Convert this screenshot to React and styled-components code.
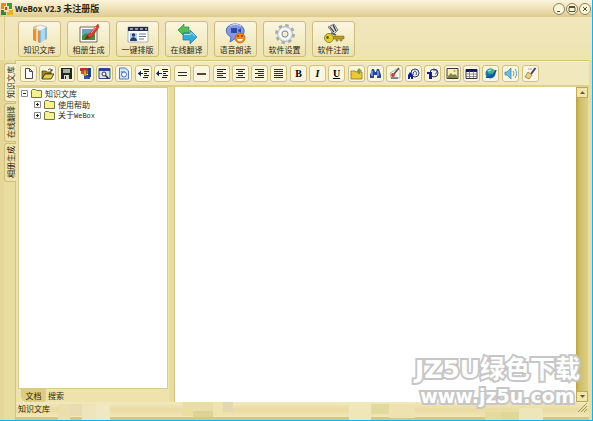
import React, { useState } from "react";
import styled, { createGlobalStyle } from "styled-components";

const GlobalStyle = createGlobalStyle`
  * {
    box-sizing: border-box;
  }
  body {
    margin: 0;
    font-family: "Liberation Sans", "Noto Sans CJK SC", sans-serif;
    font-size: 8px;
    color: #2c270f;
  }
  button {
    font: inherit;
    color: inherit;
    padding: 0;
    cursor: pointer;
  }
`;

const Window = styled.div`
  position: relative;
  display: flex;
  flex-direction: column;
  height: 100vh;
  border-right: 1px solid #0db4f5;
  border-bottom: 1px solid #0db4f5;
  background: #efe5b3;
`;

const TitleBar = styled.header`
  display: flex;
  align-items: center;
  height: 17px;
  padding: 0 1px;
  gap: 2px;
  background: linear-gradient(#fbf3dc, #f3e8c2 35%, #e3d19e 85%, #dcc98e);
`;

const Title = styled.h1`
  flex: 1;
  margin: 0;
  font-family: "Open Sans", "Noto Sans CJK SC", sans-serif;
  font-size: 8px;
  line-height: 16px;
  font-weight: bold;
  white-space: pre;
`;

const TitleCjk = styled.span`
  font-size: 9px;
`;

const WindowButton = styled.button`
  display: flex;
  align-items: center;
  justify-content: center;
  width: 12px;
  height: 12px;
  margin-left: -1px;
  border: 1px solid #8e8256;
  border-radius: 50%;
  background: #fbf5dc;
`;

const MainToolbar = styled.nav`
  display: flex;
  gap: 6px;
  height: 43px;
  margin-left: 4px;
  padding: 4px 13px;
  border-left: 1px solid #dccb8b;
  background: linear-gradient(#f1e6bd, #eee4b0);
`;

const MainButton = styled.button`
  display: flex;
  flex-direction: column;
  align-items: center;
  width: 43px;
  height: 36px;
  padding-top: 1px;
  border: 1px solid #cdbb7f;
  border-radius: 3px;
  background: linear-gradient(#fbf6e0, #f3ebc4 60%, #ede1ae);
  font-family: "Noto Sans CJK SC", sans-serif;
  line-height: 10px;

  svg {
    flex: none;
    width: 22px;
    height: 22px;
  }
`;

const Workspace = styled.div`
  display: flex;
  flex: 1;
  min-height: 0;
  border-right: 3px solid #eadb9f;
  border-left: 4px solid #e6d698;
  background: #e9dc9f;
`;

const SideTabs = styled.div`
  display: flex;
  flex-direction: column;
  gap: 1px;
  width: 12px;
  padding-top: 3px;
  border-right: 1px solid #d6c57f;
`;

const SideTab = styled.button`
  height: 39px;
  width: 12px;
  border: 1px solid #cfbd7b;
  border-right: 0;
  border-radius: 3px 0 0 3px;
  background: ${(p) => (p.$active ? "#f7f0cf" : "#eee2ac")};
`;

const SideLabel = styled.span`
  display: block;
  width: 10px;
  margin: 0 auto;
  line-height: 10px;
  font-family: "Noto Sans CJK SC", sans-serif;
  writing-mode: vertical-rl;
  text-orientation: sideways;
  text-align: center;
  height: 37px;
  transform: rotate(180deg);
`;

const Main = styled.main`
  display: flex;
  flex-direction: column;
  flex: 1;
  min-width: 0;
`;

const EditToolbar = styled.div`
  display: flex;
  align-items: center;
  gap: 3px;
  height: 27px;
  padding: 1px 4px 0;
  border-top: 1px solid #d4c37c;
  border-bottom: 2px solid #dfcf8d;
  background: #f1e8bd;
  box-shadow: inset 0 1px #f9f3d5;
`;

const ToolGroup = styled.div`
  display: flex;
  gap: 2px;
`;

const ToolButton = styled.button`
  display: flex;
  align-items: center;
  justify-content: center;
  width: 17px;
  height: 17px;
  border: 1px solid #d1c084;
  border-radius: 3px;
  background: #fbf7df;

  svg {
    width: 13px;
    height: 13px;
  }
`;

const Glyph = styled.span`
  font-family: "Liberation Serif", serif;
  font-size: 10px;
  line-height: 12px;
  font-weight: bold;
  color: #000;
  font-style: ${(p) => (p.$italic ? "italic" : "normal")};
  text-decoration: ${(p) => (p.$underline ? "underline" : "none")};
`;

const Panes = styled.div`
  display: flex;
  flex: 1;
  min-height: 0;
`;

const LeftPane = styled.section`
  display: flex;
  flex-direction: column;
  width: 153px;
  background: #eee3ad;
`;

const TreeBox = styled.div`
  flex: 1;
  margin: 0 1px 0 2px;
  padding: 0 0 0 2px;
  border: 1px solid #d8ca8d;
  background: #fff;
`;

const TreeList = styled.ul`
  margin: 0;
  padding: 0 0 0 ${(p) => (p.$nested ? "13px" : "0")};
  list-style: none;
`;

const TreeRow = styled.div`
  display: flex;
  align-items: center;
  gap: 3px;
  height: 11px;
  font-family: "Noto Sans CJK SC", sans-serif;
  line-height: 11px;
`;

const Latin = styled.span`
  font-family: "Liberation Mono", monospace;
  font-size: 7px;
`;

const Expander = styled.button`
  display: flex;
  width: 7px;
  height: 7px;
  border: 0;
  background: none;
`;

const PaneTabs = styled.div`
  display: flex;
  height: 13px;
  padding-left: 5px;
`;

const PaneTab = styled.button`
  width: ${(p) => (p.$active ? "25px" : "20px")};
  border: 0;
  border-radius: 0 0 3px 6px;
  background: ${(p) => (p.$active ? "#ddcd7c" : "transparent")};
  font-family: "Noto Sans CJK SC", sans-serif;
  line-height: 12px;
`;

const Editor = styled.section`
  display: flex;
  flex: 1;
  min-width: 0;
  margin: 0 0 0 5px;
  border-left: 1px solid #d2c27e;
`;

const Paper = styled.textarea`
  flex: 1;
  min-width: 0;
  padding: 4px;
  border: 0;
  outline: 0;
  resize: none;
  background: #fff;
`;

const ScrollBar = styled.div`
  display: flex;
  flex-direction: column;
  justify-content: space-between;
  width: 12px;
  margin-right: 1px;
  background: linear-gradient(90deg, #b9a449, #cfbd68 30%, #decf86);
`;

const ScrollButton = styled.button`
  display: flex;
  align-items: center;
  justify-content: center;
  width: 12px;
  height: 11px;
  border: 1px solid #bda95a;
  background: #f1e5ac;
`;

const StatusBar = styled.footer`
  display: flex;
  align-items: flex-start;
  justify-content: space-between;
  height: 18px;
  padding: 1px 2px 0;
  border-bottom: 3px solid #d9c77d;
  background: linear-gradient(#f3e9c0, #e9dba1 50%, #f1e7b9);
  font-family: "Noto Sans CJK SC", sans-serif;
  line-height: 11px;
`;

/* printed over the editor corner */
const Stamp = styled.div`
  position: absolute;
  right: 12px;
  bottom: 13px;
  display: flex;
  flex-direction: column;
  align-items: center;
  color: #fff;
  font-family: "DejaVu Sans", "Noto Sans CJK SC", sans-serif;
  font-weight: bold;
  white-space: nowrap;
  paint-order: stroke;
  -webkit-text-stroke: 4px #c6c6c6;
  pointer-events: none;
`;

const StampName = styled.div`
  font-size: 25px;
  line-height: 30px;
`;

const StampUrl = styled.div`
  font-size: 19px;
  line-height: 22px;
`;

const Mosaic = styled.svg`
  position: absolute;
  left: 0;
  bottom: 0;
  width: 593px;
  height: 20px;
  pointer-events: none;
`;

const mosaicBlocks = [
  [58, 4, 12, 16, "#ebe0ad"],
  [70, 4, 12, 12, "#e8ddb2"],
  [82, 6, 14, 14, "#efe5bc"],
  [96, 4, 14, 16, "#f0e8c2"],
  [183, 2, 10, 14, "#eadf9f"],
  [193, 2, 20, 10, "#e9dfa4"],
  [213, 2, 10, 14, "#eee4ad"],
  [223, 2, 10, 10, "#e2d9b0"],
  [193, 11, 20, 6, "#ddd397"],
  [349, 4, 22, 16, "#f0e7b8"],
  [371, 4, 18, 10, "#e1da9f"],
  [389, 4, 26, 14, "#eee3b0"],
  [485, 12, 16, 8, "#e5db9d"],
  [501, 12, 18, 8, "#dfd897"],
  [519, 8, 24, 12, "#eee6b9"],
];

const svg = (box, children) => (
  <svg viewBox={`0 0 ${box} ${box}`} aria-hidden="true">
    {children}
  </svg>
);

const Logo = () => (
  <svg width="12" height="12" viewBox="0 0 12 12" aria-hidden="true">
    <path d="M0 0h5v3H3v3H0z" fill="#e98a1c" />
    <path d="M6 0h5v6H8V3H6z" fill="#3f9b3a" />
    <path d="M0 7h3v2h2v3H0z" fill="#2c8a3e" />
    <path d="M6 9h2V7h4v5H6z" fill="#e8b41c" />
    <path d="M4 4h2v3H4z" fill="#d8451c" />
  </svg>
);

const bigIcons = {
  library: svg(
    22,
    <>
      <path d="M4 4l4-2v16l-4-1z" fill="#f6b868" />
      <path d="M4 6l7 2v12l-7-3z" fill="#ef8c2b" />
      <path d="M5 5l6-3 7 2-6 4z" fill="#f4f4f4" stroke="#a9b3ba" strokeWidth=".6" />
      <path d="M11 8l7-4v12l-7 4z" fill="#85b9d8" />
      <path d="M13 7v12M15 6v12" stroke="#e7f2f8" />
      <path d="M8 7v12" stroke="#fff2dd" strokeWidth="1.4" />
    </>
  ),
  album: svg(
    22,
    <>
      <path d="M2 4h17v15H2z" fill="#fff" stroke="#6e6a5a" />
      <path d="M4 6h13v11H4z" fill="#62a9bd" />
      <path d="M4 13l4-3 4 3 5-2v6H4z" fill="#4c8c3d" />
      <path d="M20 1l-8 9-3 2 2 3 3-1 7-10z" fill="#d7432c" stroke="#8f2419" strokeWidth=".5" />
      <path d="M18 4l-5 6" stroke="#f7b4a0" />
      <path d="M9 12l-3 5 6-2z" fill="#5b3824" />
    </>
  ),
  layout: svg(
    22,
    <>
      <path d="M1 4h20v15H1z" fill="#fff" stroke="#8b92a3" strokeWidth=".7" />
      <path d="M1 4h20v4H1z" fill="#252e49" />
      <path d="M3 6h3M8 6h3M13 6h3M18 6h2" stroke="#fff" />
      <path d="M3 10h7v8H3z" fill="#b8d0e8" />
      <circle cx="6.5" cy="12" r="1.7" fill="#243f6d" />
      <path d="M3 18c0-5 7-5 7 0z" fill="#243f6d" />
      <path d="M12 11h7M12 13.5h7M12 16h5" stroke="#6c7ba0" />
    </>
  ),
  translate: svg(
    22,
    <>
      <path d="M2 7l6-6v3h5v6H8v3z" fill="#57bd5a" stroke="#318d43" strokeWidth=".7" />
      <path d="M21 14l-7-7v3H7v7h7v4z" fill="#38a8de" stroke="#1877a8" strokeWidth=".7" />
      <path d="M8 11.500h7v-2l4 4" fill="none" stroke="#a8e0f6" />
    </>
  ),
  voice: svg(
    22,
    <>
      <path d="M10 1c12 0 12 14 1 14l-6 4 1-5C-2 10 1 1 10 1z" fill="#8399e4" stroke="#5268bf" />
      <path d="M5 3c3-2 8-2 11 0" stroke="#dce4ff" fill="none" />
      <path d="M6 5h6v5H6zM13 7l3-2v5l-3-2z" fill="#3048a4" />
      <circle cx="15" cy="15" r="5" fill="#f28a20" stroke="#bc520f" strokeWidth=".7" />
      <path d="M12 16c1 3 5 3 6 0z" fill="#fff" />
      <path d="M13 12v2M17 12v2" stroke="#652a09" strokeWidth="1.2" />
    </>
  ),
  settings: svg(
    22,
    <>
      <circle cx="11" cy="11" r="8.500" fill="none" stroke="#a4abb0" strokeWidth="3" strokeDasharray="3.340 3.340" />
      <circle cx="11" cy="11" r="7.500" fill="#e2e5e8" stroke="#a4abb0" strokeWidth=".8" />
      <circle cx="11" cy="11" r="5" fill="none" stroke="#fff" strokeWidth="1.500" />
      <circle cx="11" cy="11" r="3" fill="#f5edcb" stroke="#878e94" />
    </>
  ),
  register: svg(
    22,
    <>
      <path d="M5 4l6-3 4 6-4 4z" fill="#d8dadb" stroke="#616568" strokeWidth=".8" />
      <path d="M7 4l4 5M10 2l3 6" stroke="#33383a" strokeWidth="1.200" />
      <path d="M8 13h13v3h-2v2h-2v-2h-2v2h-2v-2H8z" fill="#b59b22" stroke="#76651b" strokeWidth=".5" />
      <circle cx="6" cy="15" r="4.500" fill="#e1cf31" stroke="#85761e" strokeWidth=".8" />
      <circle cx="4.500" cy="14.500" r="1.400" fill="#63601f" />
      <path d="M8 10l5 2" stroke="#5d6265" strokeWidth="1.500" />
    </>
  ),
};

const lines = (rows) => svg(13, <path d={rows} stroke="#2e2e2e" strokeWidth="1" fill="none" />);

const indentIcon = (arrow) =>
  svg(
    13,
    <>
      <path d="M6 2.500h6M7 4.500h5M7 6.500h3M7 8.500h5M6 10.500h5" stroke="#222" />
      <path d={arrow} fill="#16245a" />
      <path d="M1 6.500h5" stroke="#16245a" />
    </>
  );

const fileTools = [
  ["新建", svg(13, <path d="M3.500 1.500h4l3 3v7h-7zM7.500 1.500v3h3" fill="#fff" stroke="#4a4a52" />)],
  [
    "打开",
    svg(
      13,
      <>
        <path d="M1 4h4l1 1h4v2H4l-3 5z" fill="#a18a1e" stroke="#29240a" strokeWidth=".6" />
        <path d="M4 7h9l-3 5H1z" fill="#e5d04c" stroke="#29240a" strokeWidth=".8" />
        <path d="M7 3c2-2 3-1 4 1M11 2v2H9" fill="none" stroke="#222" strokeWidth=".8" />
      </>
    ),
  ],
  [
    "保存",
    svg(
      13,
      <>
        <path d="M1 1h11v11H1z" fill="#23281f" />
        <path d="M3 2h7v4H3z" fill="#a8ad9e" />
        <path d="M4 8h5v4H4z" fill="#d7dacf" />
        <path d="M5 9h1v3H5z" fill="#23281f" />
      </>
    ),
  ],
  [
    "压缩",
    svg(
      13,
      <>
        <path d="M1 1h9v3H1z" fill="#bd3030" />
        <path d="M2 4h8v3H2z" fill="#d9582b" />
        <path d="M5 8h6v4H5z" fill="#3452a9" />
        <path d="M9 1h3v9H9z" fill="#283d82" />
        <path d="M5 3h2v6H5z" fill="#e9c53a" stroke="#6b4310" strokeWidth=".5" />
      </>
    ),
  ],
  [
    "预览",
    svg(
      13,
      <>
        <path d="M1 1.500h11v10H1z" fill="#dce8f7" stroke="#394a80" />
        <path d="M1 1h11v3H1z" fill="#2d468e" />
        <circle cx="6" cy="7" r="2" fill="#fff" stroke="#334" />
        <path d="M7.500 8.500l3 3" stroke="#222" strokeWidth="1.500" />
      </>
    ),
  ],
  [
    "文档",
    svg(
      13,
      <>
        <path d="M2.500 1h6l3 3v8h-9z" fill="#d6e6fa" stroke="#5579ba" />
        <path d="M4 4h4v5H4z" fill="#7fa7df" />
        <circle cx="7" cy="7.500" r="2.500" fill="#f2f8ff" stroke="#4d75b6" />
      </>
    ),
  ],
];

const toolGroups = [
  fileTools,
  [
    ["减少缩进", indentIcon("M4 3.500v6L1 6.500z")],
    ["增加缩进", indentIcon("M3 3.500v6L0 6.500z")],
  ],
  [
    ["双线", lines("M2 5.500h9M2 8.500h9")],
    ["横线", svg(13, <path d="M2 7h9" stroke="#53443c" strokeWidth="2" />)],
  ],
  [
    ["左对齐", lines("M2 2.500h9M2 4.500h6M2 6.500h9M2 8.500h6M2 10.500h9")],
    ["居中", lines("M2 2.500h9M4 4.500h5M2 6.500h9M4 8.500h5M2 10.500h9")],
    ["右对齐", lines("M2 2.500h9M5 4.500h6M2 6.500h9M5 8.500h6M2 10.500h9")],
    ["两端对齐", lines("M2 2.500h9M2 4.500h9M2 6.500h9M2 8.500h9M2 10.500h9")],
  ],
  [
    ["加粗", <Glyph>B</Glyph>],
    ["斜体", <Glyph $italic>I</Glyph>],
    ["下划线", <Glyph $underline>U</Glyph>],
  ],
  [
    [
      "导入",
      svg(
        13,
        <>
          <path d="M1 4h4l1 1h6v7H1z" fill="#e9ca3c" stroke="#8a731b" strokeWidth=".8" />
          <path d="M6 5l3-4 3 3-2 1v2H8V5z" fill="#7aa43a" />
        </>
      ),
    ],
    [
      "查找",
      svg(
        13,
        <>
          <path d="M3 2h2l1 3h1l1-3h2l2 6v3H8V8H5v3H1V8z" fill="#24469c" />
          <path d="M3 4v5M9 4v5" stroke="#b9d0fa" />
        </>
      ),
    ],
    [
      "标注",
      svg(
        13,
        <>
          <path d="M2 6l7-4 3 1v8H3z" fill="#f4f4f0" stroke="#8a8878" strokeWidth=".6" />
          <path d="M11 1L6 7" stroke="#5f4938" strokeWidth="1.500" />
          <circle cx="5" cy="8" r="2" fill="#c5472e" />
          <path d="M3 11h7" stroke="#263264" />
        </>
      ),
    ],
    [
      "查找网页",
      svg(
        13,
        <>
          <circle cx="8" cy="6" r="4" fill="#eef0f4" stroke="#353a66" />
          <path d="M6 8c0-6 5-4 3 0" fill="none" stroke="#353a66" />
          <path d="M1 12V8l2-3 3 3v4H4v-2H3v2z" fill="#13218c" />
        </>
      ),
    ],
    [
      "替换",
      svg(
        13,
        <>
          <circle cx="8" cy="6" r="4" fill="#eef0f4" stroke="#353a66" />
          <path d="M7 3h2c3 0 2 4 0 4" fill="none" stroke="#353a66" />
          <path d="M1 5h5v7H3V7H1z" fill="#13218c" />
        </>
      ),
    ],
  ],
  [
    [
      "图片",
      svg(
        13,
        <>
          <path d="M1 1.500h11v10H1z" fill="#f5efb8" stroke="#3b3b31" />
          <path d="M2 9l3-3 2 2 2-1 2 2v2H2z" fill="#87834c" />
          <circle cx="8.500" cy="4" r="1" fill="#d59b31" />
        </>
      ),
    ],
    [
      "表格",
      svg(
        13,
        <>
          <path d="M1 2.500h11v9H1z" fill="#fff" stroke="#33333c" />
          <path d="M1 2h11v3H1z" fill="#16165c" />
          <path d="M1 7h11M1 9.500h11M4.500 4v7M8.500 4v7" stroke="#666" strokeWidth=".7" />
        </>
      ),
    ],
    [
      "网页",
      svg(
        13,
        <>
          <circle cx="6.500" cy="6.500" r="5" fill="#1776ae" />
          <path d="M3 4c3-4 7-2 8 0l-3 3-4-1z" fill="#42b48b" />
          <path d="M2 10c5 1 8-1 10-7" fill="none" stroke="#124b86" strokeWidth="1.500" />
          <path d="M4 4l3-1" stroke="#c8f3ee" />
        </>
      ),
    ],
  ],
  [
    [
      "朗读",
      svg(
        13,
        <>
          <path d="M1 5h2l4-4v11L3 8H1z" fill="#70bde0" stroke="#347da5" strokeWidth=".7" />
          <path d="M9 4c1 1 1 4 0 5M11 2c2 3 2 6 0 9" stroke="#45a0cf" fill="none" />
        </>
      ),
    ],
  ],
  [
    [
      "格式刷",
      svg(
        13,
        <>
          <path d="M11.500 1L7 7" stroke="#454078" strokeWidth="2" />
          <path d="M4 5l4 3-3 4-4-2z" fill="#e7cf83" stroke="#8a6b38" strokeWidth=".7" />
          <path d="M4 2h4" stroke="#b59cc2" />
        </>
      ),
    ],
  ],
];

const mainTools = [
  ["知识文库", "library"],
  ["相册生成", "album"],
  ["一键排版", "layout"],
  ["在线翻译", "translate"],
  ["语音朗读", "voice"],
  ["软件设置", "settings"],
  ["软件注册", "register"],
];

const sideTabs = ["知识文库", "在线翻译", "相册生成"];

const Folder = () => (
  <svg width="11" height="9" viewBox="0 0 11 9" aria-hidden="true">
    <path d="M.5 8.500v-7l1-1h3l1 1h5v7z" fill="#f7f291" stroke="#77743c" />
  </svg>
);

const TreeNode = ({ label, latin, open, onToggle }) => (
  <TreeRow>
    <Expander type="button" aria-label={label} aria-expanded={open} onClick={onToggle}>
      <svg width="7" height="7" viewBox="0 0 7 7" aria-hidden="true">
        <path d="M.5 .5h6v6h-6z" fill="#fff" stroke="#8b8b8b" />
        <path d={open ? "M2 3.500h3" : "M2 3.500h3M3.500 2v3"} stroke="#222" />
      </svg>
    </Expander>
    <Folder />
    <span>
      {label}
      {latin && <Latin>{latin}</Latin>}
    </span>
  </TreeRow>
);

const App = () => {
  const [side, setSide] = useState(sideTabs[0]);
  const [pane, setPane] = useState("文档");
  const [open, setOpen] = useState(true);

  return (
    <Window>
      <GlobalStyle />
      <TitleBar>
        <Logo />
        <Title>
          WeBox V2.3 <TitleCjk>未注册版</TitleCjk>
        </Title>
        {[
          ["最小化", "M3 7.500h3"],
          ["最大化", "M2 3.500h6v4H2zM2 2.500h6"],
          ["关闭", "M3 3l4 4M7 3l-4 4"],
        ].map(([name, d]) => (
          <WindowButton key={name} type="button" aria-label={name}>
            <svg width="10" height="10" viewBox="0 0 10 10" aria-hidden="true">
              <path d={d} fill="none" stroke="#5a5130" />
            </svg>
          </WindowButton>
        ))}
      </TitleBar>

      <MainToolbar>
        {mainTools.map(([label, icon]) => (
          <MainButton key={label} type="button">
            {bigIcons[icon]}
            {label}
          </MainButton>
        ))}
      </MainToolbar>

      <Workspace>
        <SideTabs>
          {sideTabs.map((label) => (
            <SideTab key={label} type="button" $active={side === label} onClick={() => setSide(label)}>
              <SideLabel>{label}</SideLabel>
            </SideTab>
          ))}
        </SideTabs>

        <Main>
          <EditToolbar>
            {toolGroups.map((group) => (
              <ToolGroup key={group[0][0]}>
                {group.map(([name, icon]) => (
                  <ToolButton key={name} type="button" aria-label={name}>
                    {icon}
                  </ToolButton>
                ))}
              </ToolGroup>
            ))}
          </EditToolbar>

          <Panes>
            <LeftPane>
              <TreeBox>
                <TreeList>
                  <li>
                    <TreeNode label="知识文库" open={open} onToggle={() => setOpen(!open)} />
                    {open && (
                      <TreeList $nested>
                        <li>
                          <TreeNode label="使用帮助" open={false} />
                        </li>
                        <li>
                          <TreeNode label="关于" latin="WeBox" open={false} />
                        </li>
                      </TreeList>
                    )}
                  </li>
                </TreeList>
              </TreeBox>
              <PaneTabs>
                {["文档", "搜索"].map((label) => (
                  <PaneTab key={label} type="button" $active={pane === label} onClick={() => setPane(label)}>
                    {label}
                  </PaneTab>
                ))}
              </PaneTabs>
            </LeftPane>
            <Editor>
              <Paper aria-label="编辑区" spellCheck="false" />
              <ScrollBar>
                <ScrollButton type="button" aria-label="向上滚动">
                  <svg width="5" height="3" viewBox="0 0 5 3" aria-hidden="true">
                    <path d="M0 3l2.500-3L5 3z" fill="#6b5b22" />
                  </svg>
                </ScrollButton>
                <ScrollButton type="button" aria-label="向下滚动">
                  <svg width="5" height="3" viewBox="0 0 5 3" aria-hidden="true">
                    <path d="M0 0l2.500 3L5 0z" fill="#6b5b22" />
                  </svg>
                </ScrollButton>
              </ScrollBar>
            </Editor>
          </Panes>

          <StatusBar>
            <span>知识文库</span>
            <svg width="9" height="9" viewBox="0 0 9 9" aria-hidden="true">
              <path d="M0 9l9-9M3 9l6-6M6 9l3-3" stroke="#ab9a55" />
            </svg>
          </StatusBar>
        </Main>
      </Workspace>

      <Mosaic viewBox="0 0 593 20" aria-hidden="true">
        {mosaicBlocks.map(([x, y, w, h, fill]) => (
          <rect key={`${x}-${y}`} x={x} y={y} width={w} height={h} fill={fill} />
        ))}
      </Mosaic>
      <Stamp>
        <StampName>JZ5U绿色下载</StampName>
        <StampUrl>www.jz5u.com</StampUrl>
      </Stamp>
    </Window>
  );
};

export default App;
